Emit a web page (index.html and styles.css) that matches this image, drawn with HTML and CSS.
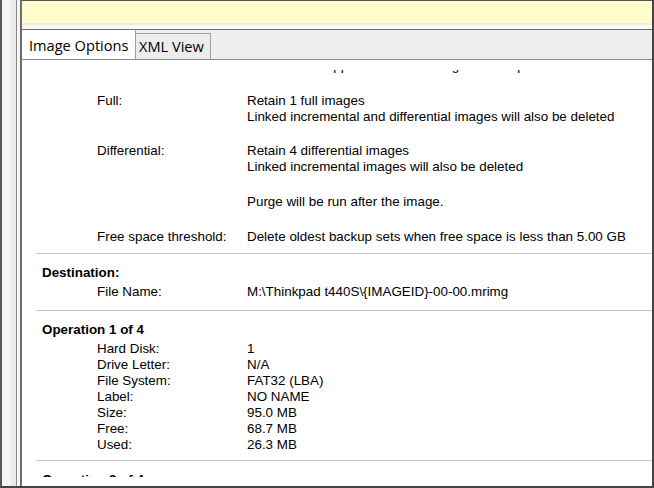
FILE: index.html
```html
<!DOCTYPE html>
<html>
<head>
<meta charset="utf-8">
<link rel="stylesheet" href="styles.css">
</head>
<body>
<div class="frame">
  <div class="sidebar"></div>
  <div class="gutter"></div>
  <div class="main">
    <div class="info"></div>
    <div class="info-gap"></div>
    <div class="tabstrip">
      <div class="tab tab-active">Image Options</div>
      <div class="tab tab-idle">XML View</div>
    </div>
    <div class="panel">
      <div class="viewport">
        <div class="scroll">
          <section class="sec sec-retention">
            <div class="row"><div class="label"></div><div class="value">Rules will be applied to all matching sets at top level</div></div>
            <div class="row"><div class="label">Full:</div><div class="value">Retain 1 full images<br>Linked incremental and differential images will also be deleted</div></div>
            <div class="row"><div class="label">Differential:</div><div class="value">Retain 4 differential images<br>Linked incremental images will also be deleted</div></div>
            <div class="row"><div class="label"></div><div class="value">Purge will be run after the image.</div></div>
            <div class="row"><div class="label">Free space threshold:</div><div class="value">Delete oldest backup sets when free space is less than 5.00 GB</div></div>
          </section>
          <section class="sec sec-dest">
            <div class="heading">Destination:</div>
            <div class="rows">
              <div class="row"><div class="label">File Name:</div><div class="value">M:\Thinkpad t440S\{IMAGEID}-00-00.mrimg</div></div>
            </div>
          </section>
          <section class="sec sec-op">
            <div class="heading">Operation 1 of 4</div>
            <div class="rows">
              <div class="row"><div class="label">Hard Disk:</div><div class="value">1</div></div>
              <div class="row"><div class="label">Drive Letter:</div><div class="value">N/A</div></div>
              <div class="row"><div class="label">File System:</div><div class="value">FAT32 (LBA)</div></div>
              <div class="row"><div class="label">Label:</div><div class="value">NO NAME</div></div>
              <div class="row"><div class="label">Size:</div><div class="value">95.0 MB</div></div>
              <div class="row"><div class="label">Free:</div><div class="value">68.7 MB</div></div>
              <div class="row"><div class="label">Used:</div><div class="value">26.3 MB</div></div>
            </div>
          </section>
          <section class="sec sec-next">
            <div class="heading">Operation 2 of 4</div>
            <div class="rows">
              <div class="row"><div class="label">Hard Disk:</div><div class="value">1</div></div>
            </div>
          </section>
        </div>
      </div>
    </div>
  </div>
</div>
</body>
</html>
```

FILE: styles.css
```css
html, body {
  margin: 0;
  padding: 0;
}
body {
  width: 654px;
  height: 488px;
  overflow: hidden;
  background: #f0f0f0;
  font-family: "Liberation Sans", Arial, sans-serif;
  font-size: 13.4px;
  color: #000;
}
.frame {
  box-sizing: border-box;
  width: 654px;
  height: 488px;
  display: flex;
  border-left: 2px solid #555555;
  border-right: 2px solid #444444;
  border-bottom: 2px solid #444444;
}
.sidebar {
  width: 14px;
  flex: none;
  background: linear-gradient(to right, #f4f4f4 9px, #e9e9e9 9px);
  border-right: 1px solid #8a8a8a;
}
.gutter {
  width: 3px;
  flex: none;
  background: #f5f5f5;
}
.main {
  flex: 1;
  display: flex;
  flex-direction: column;
  border-left: 2px solid #6c6c6c;
  min-width: 0;
}
.info {
  height: 22px;
  flex: none;
  border-top: 1px solid #555555;
  background: #fffdcb;
}
.info-gap {
  height: 6px;
  flex: none;
  background: linear-gradient(to bottom, #ececec 2px, #f9f9f9 2px);
}
.tabstrip {
  flex: none;
  height: 29px;
  display: flex;
  align-items: flex-end;
  background: #efefef;
  border-top: 1px solid #6e6e6e;
  border-bottom: 1px solid #898989;
}
.tab {
  box-sizing: border-box;
  font-family: "Open Sans", "Noto Sans", sans-serif;
  font-size: 14.6px;
  line-height: 20px;
  color: #000;
  white-space: nowrap;
}
.tab-active {
  width: 114px;
  height: 29px;
  padding: 5px 0 0 7px;
  background: #ffffff;
  border-right: 1px solid #a0a0a0;
}
.tab-idle {
  width: 75px;
  height: 26px;
  padding: 2px 0 0 3px;
  background: #ececec;
  border-top: 1px solid #a0a0a0;
  border-right: 1px solid #a0a0a0;
}
.panel {
  flex: 1;
  background: #ffffff;
  padding: 10px 0 9px 0;
  display: flex;
  flex-direction: column;
  min-height: 0;
}
.viewport {
  flex: 1;
  overflow: hidden;
  min-height: 0;
}
.scroll {
  margin-top: -12px;
}
.sec {
  margin-left: 14px;
  border-bottom: 1px solid #c3c3c3;
  line-height: 16px;
}
.sec-retention {
  display: flex;
  flex-direction: column;
  gap: 18.7px;
  padding-bottom: 8px;
}
.sec-dest {
  padding: 11px 0 10px 0;
}
.sec-op {
  padding: 11px 0 7px 0;
}
.sec-next {
  padding: 11px 0 7px 0;
}
.heading {
  padding-left: 6px;
  font-weight: bold;
}
.rows {
  margin-top: 3px;
}
.row {
  display: grid;
  grid-template-columns: 150px 1fr;
  padding-left: 61px;
  white-space: nowrap;
}
```
